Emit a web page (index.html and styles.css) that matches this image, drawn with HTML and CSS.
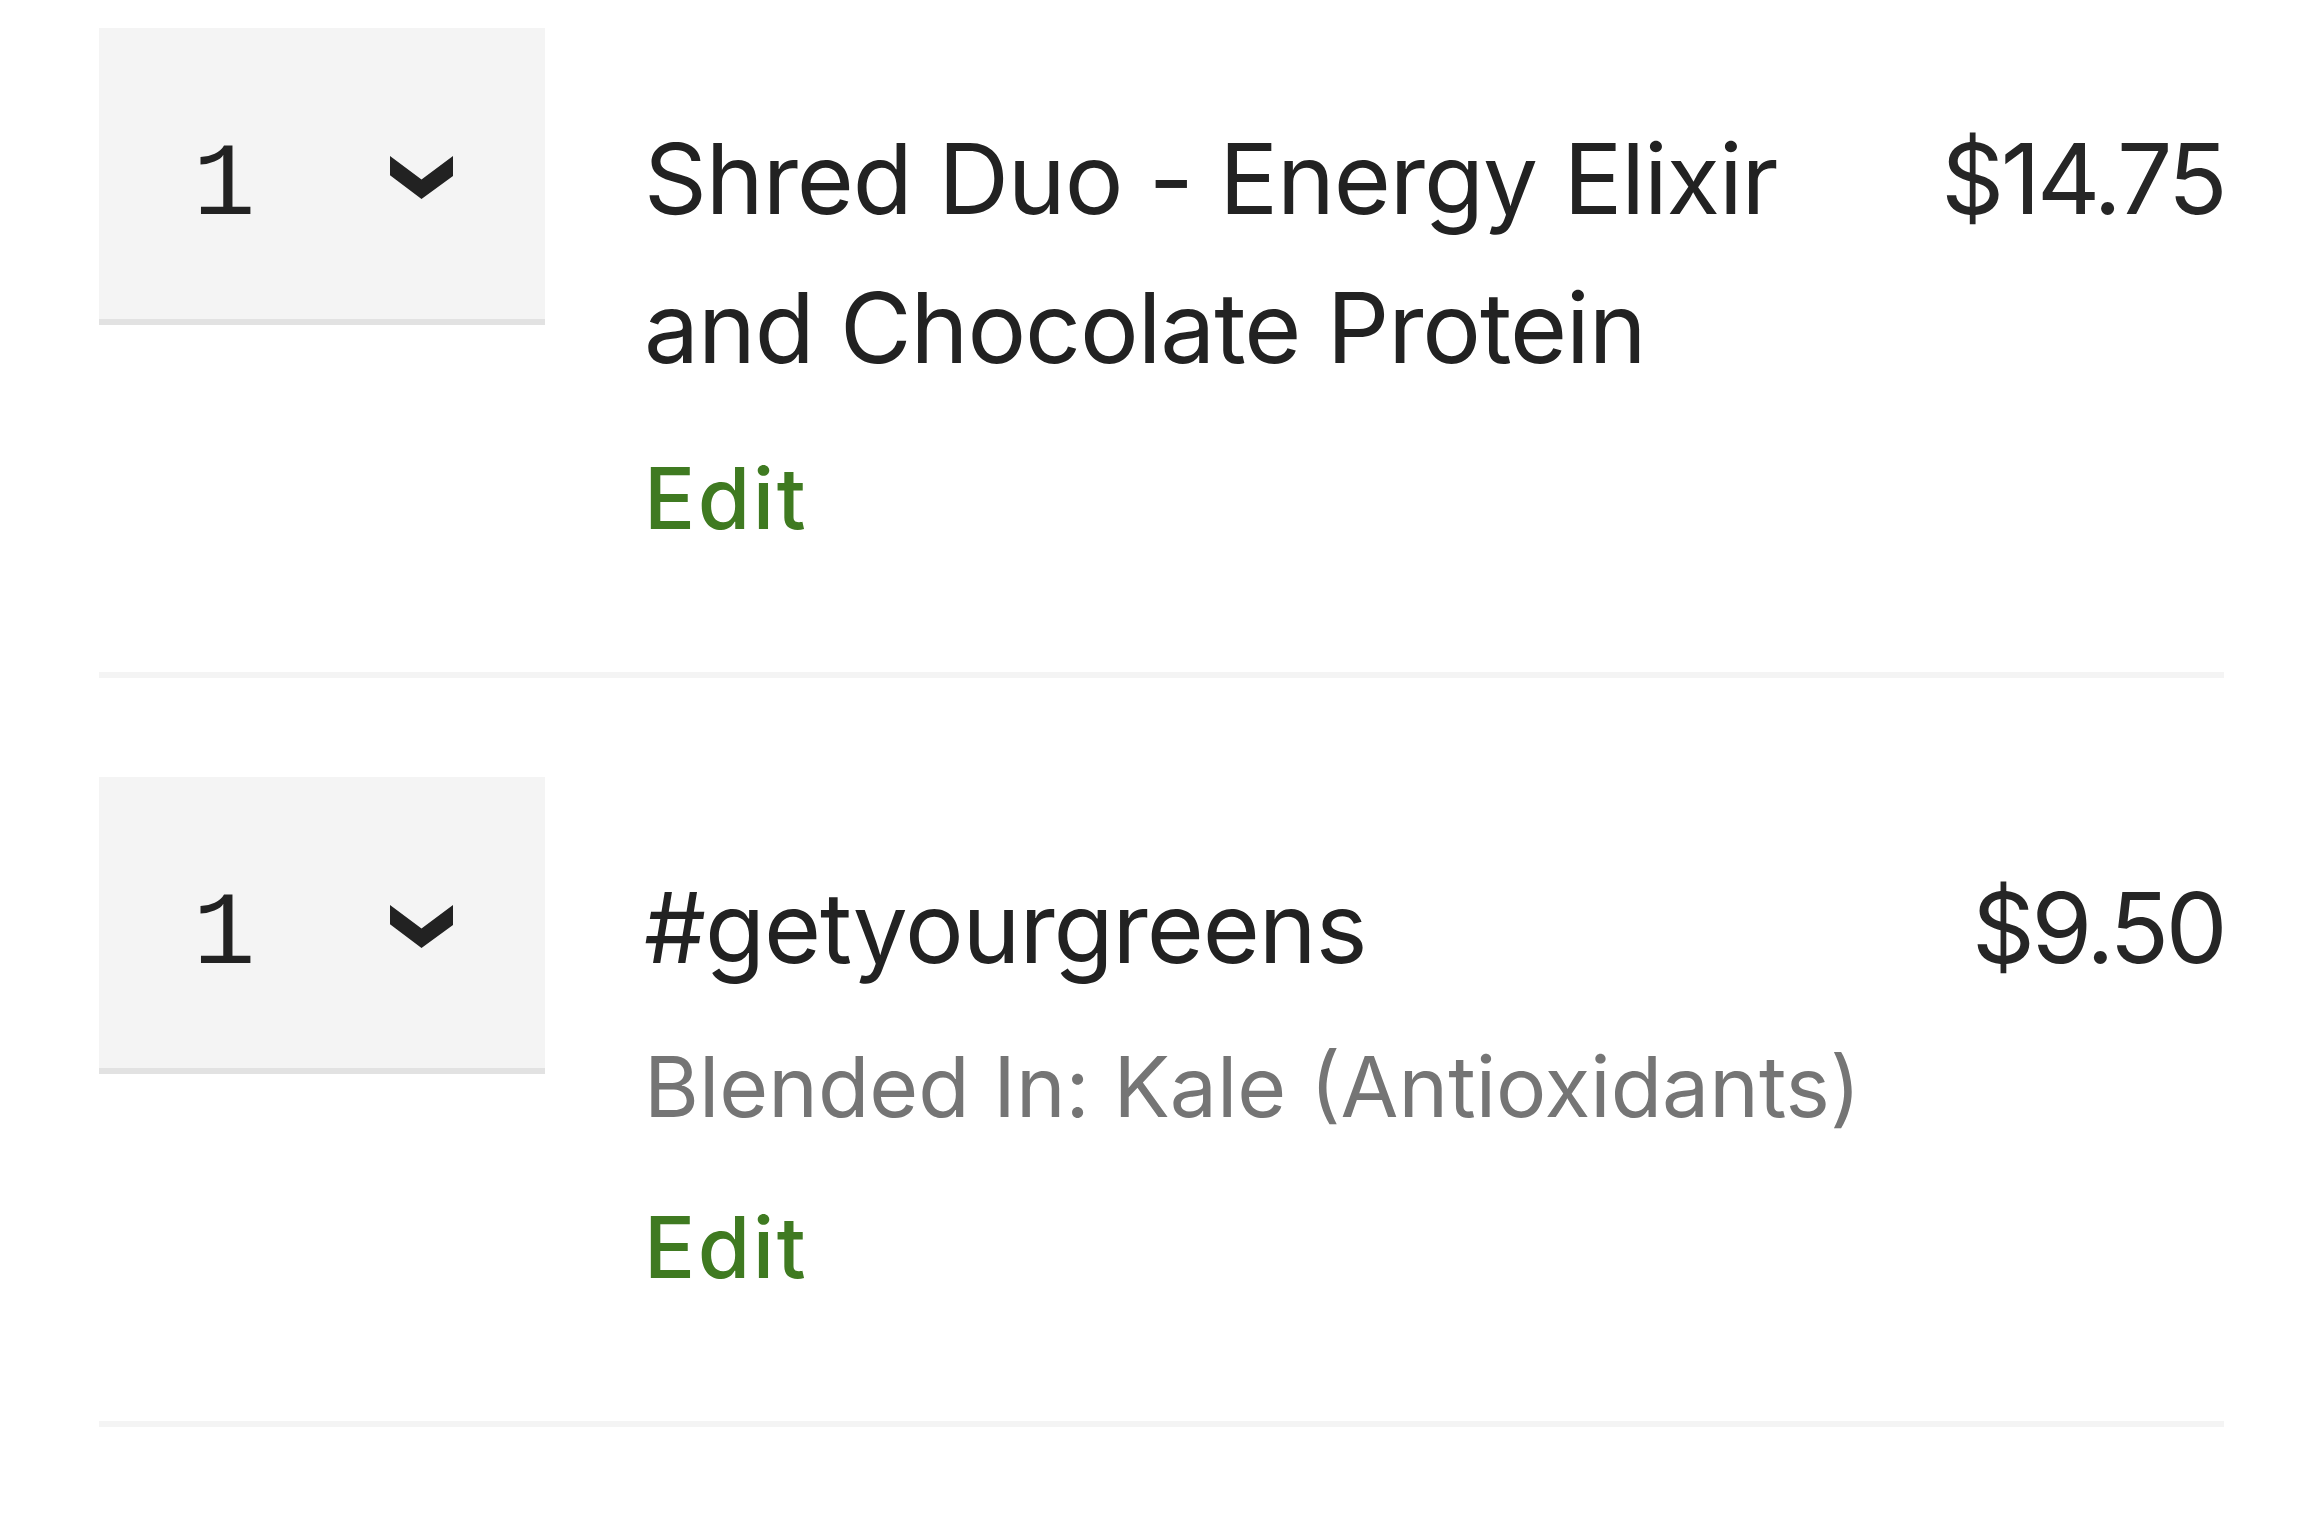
FILE: index.html
```html
<!DOCTYPE html>
<html lang="en">
<head>
<meta charset="utf-8">
<title>Cart items</title>
<link rel="stylesheet" href="styles.css">
</head>
<body>
<ul class="cart">
  <li class="item">
    <div class="qty">
      <span class="qty-value">1</span>
      <svg class="chev" width="63" height="43" viewBox="0 0 63 43" aria-hidden="true"><polygon points="0,0 31.5,23.6 63,0 63,20 31.5,43 0,19.3" fill="#222"/></svg>
    </div>
    <div class="details">
      <div class="title">Shred Duo - Energy Elixir and Chocolate Protein</div>
      <a class="edit" href="#">Edit</a>
    </div>
    <div class="price">$14.75</div>
  </li>
  <li class="item">
    <div class="qty">
      <span class="qty-value">1</span>
      <svg class="chev" width="63" height="43" viewBox="0 0 63 43" aria-hidden="true"><polygon points="0,0 31.5,23.6 63,0 63,20 31.5,43 0,19.3" fill="#222"/></svg>
    </div>
    <div class="details">
      <div class="title">#getyourgreens</div>
      <div class="option">Blended In: Kale (Antioxidants)</div>
      <a class="edit edit-after-option" href="#">Edit</a>
    </div>
    <div class="price">$9.50</div>
  </li>
</ul>
</body>
</html>
```
FILE: styles.css
```css
html, body {
  margin: 0;
  padding: 0;
  background: #ffffff;
}

body {
  font-family: "Inter", "Noto Sans", sans-serif;
  color: #222222;
}

.cart {
  list-style: none;
  margin: 0 0 0 99px;
  padding: 0;
  width: 2125px;
}

.item {
  display: flex;
  align-items: flex-start;
  padding: 99px 0 123px;
  border-bottom: 6px solid #f4f4f4;
}

.item:first-child {
  padding-top: 28px;
}

.qty {
  flex: none;
  box-sizing: border-box;
  width: 446px;
  height: 297px;
  background: #f4f4f4;
  border-bottom: 6px solid #e2e2e2;
  display: flex;
  align-items: flex-start;
  justify-content: space-between;
  padding: 76px 92px 0 94px;
}

.qty-value {
  display: block;
  font-family: "Liberation Mono", "DejaVu Sans Mono", monospace;
  font-size: 104px;
  line-height: 149px;
  margin-top: 8px;
  color: #222222;
}

.chev {
  display: block;
  margin-top: 52px;
}

.details {
  flex: 1;
  min-width: 0;
  margin-left: 99px;
  padding-top: 76px;
  padding-right: 40px;
}

.title {
  font-size: 98px;
  line-height: 149px;
  letter-spacing: -1.1px;
  color: #222222;
}

.option {
  font-size: 84px;
  line-height: 100px;
  color: #757575;
  margin-top: 35px;
}

.edit {
  display: block;
  font-size: 85px;
  line-height: 100px;
  font-weight: 500;
  letter-spacing: 2.5px;
  color: #3f7a21;
  text-decoration: none;
  margin-top: 47px;
}

.edit-after-option {
  margin-top: 61px;
}

.price {
  flex: none;
  padding-top: 76px;
  font-size: 98px;
  line-height: 149px;
  letter-spacing: -3.5px;
  color: #262626;
  text-align: right;
}
```
